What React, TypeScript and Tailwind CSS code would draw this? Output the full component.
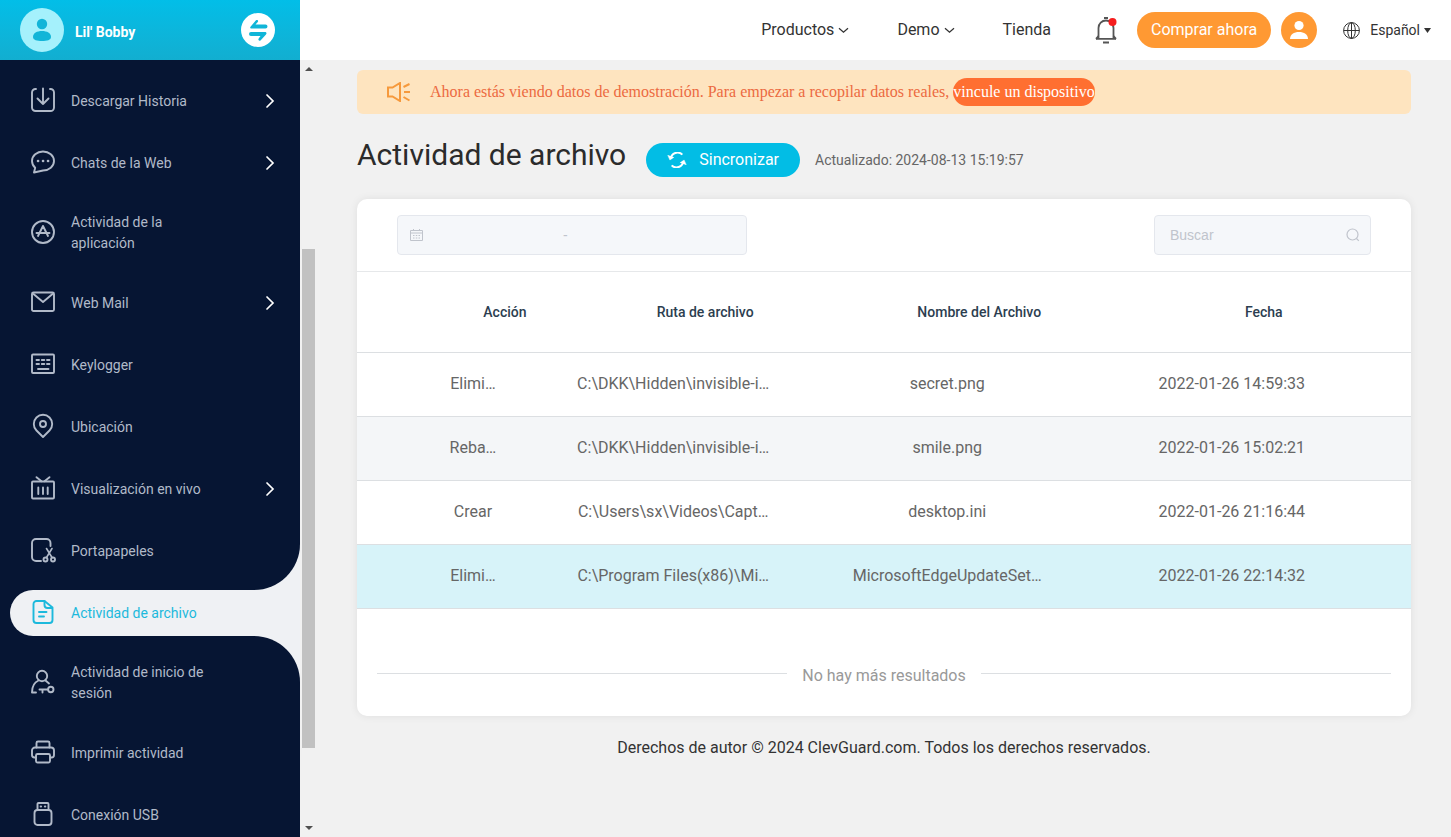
import type { ReactNode } from 'react'
import clsx from 'clsx'

type MenuItem = {
  label: string
  icon: ReactNode
  expandable?: boolean
  active?: boolean
}

const menu: MenuItem[] = [
  {
    label: 'Descargar Historia',
    expandable: true,
    icon: (
      <>
        <path d="M5 1h-.5A3.5 3.5 0 0 0 1 4.5v15A3.5 3.5 0 0 0 4.5 23h15a3.5 3.5 0 0 0 3.5-3.5v-15A3.5 3.5 0 0 0 19.5 1H19" />
        <path d="M12 .5V16M6.500 10.500l5.500 5.500 5.500-5.500" />
      </>
    ),
  },
  {
    label: 'Chats de la Web',
    expandable: true,
    icon: (
      <>
        <path d="M3 22.500l1.200-4.700A9.200 9.200 0 0 1 1 11C1 5.700 5.900 1.500 12 1.500S23 5.700 23 11s-4.900 9.500-11 9.500z" />
        <path d="M7 11h.1M12 11h.1M17 11h.1" strokeWidth="2.600" />
      </>
    ),
  },
  {
    label: 'Actividad de la aplicación',
    icon: (
      <>
        <circle cx="12" cy="12" r="11" />
        <path d="M12 6l-5 10M12 6l5 10M5.500 13h13" />
      </>
    ),
  },
  {
    label: 'Web Mail',
    expandable: true,
    icon: (
      <>
        <rect x="1" y="2.500" width="22" height="18.500" rx="1.500" />
        <path d="M2.500 4l9.500 8 9.500-8" />
      </>
    ),
  },
  {
    label: 'Keylogger',
    icon: (
      <>
        <rect x="1" y="2.500" width="22" height="18.500" rx="1" />
        <path d="M5.500 8h2.500M10.800 8h2.500M16 8h2.500M5.500 12h2.500M10.800 12h2.500M16 12h2.500M7 17h10.500" />
      </>
    ),
  },
  {
    label: 'Ubicación',
    icon: (
      <>
        <path d="M12 23l-6.500-6.500A9 9 0 0 1 2.800 10a9.200 9.200 0 0 1 18.400 0 9 9 0 0 1-2.700 6.500z" />
        <circle cx="12" cy="10" r="3" />
      </>
    ),
  },
  {
    label: 'Visualización en vivo',
    expandable: true,
    icon: (
      <>
        <rect x="1" y="5.500" width="22" height="17" rx="1" />
        <path d="M5.500 1.200l5 4M18.500 1.200l-5 4M7.300 11.500v6.500M12 11.500v6.500M16.700 11.500v6.500" />
      </>
    ),
  },
  {
    label: 'Portapapeles',
    icon: (
      <>
        <path d="M19.500 8V5a4 4 0 0 0-4-4H5a4 4 0 0 0-4 4v14a4 4 0 0 0 4 4h5" />
        <path d="M15.500 10.500l5.500 9M21 10.500l-5.500 9" strokeWidth="1.600" />
        <circle cx="14.500" cy="21.500" r="2" />
        <circle cx="22" cy="21.500" r="2" />
      </>
    ),
  },
  {
    label: 'Actividad de archivo',
    active: true,
    icon: (
      <>
        <path d="M13.500 1h-8a3 3 0 0 0-3 3v16a3 3 0 0 0 3 3h13a3 3 0 0 0 3-3V7.500z" />
        <path d="M13.500 1v4a3 3 0 0 0 3 3h4.500M8 12h7.500M8 16.500h5" />
      </>
    ),
  },
  {
    label: 'Actividad de inicio de sesión',
    icon: (
      <>
        <circle cx="11" cy="6" r="5.200" />
        <path d="M7.500 10.500C4 12 1 16 1 22.500h4M14.500 10.500l3.500 3" />
        <circle cx="19.800" cy="19.500" r="2.700" />
        <path d="M17 19.500H8.500M11.500 19.500v3" />
      </>
    ),
  },
  {
    label: 'Imprimir actividad',
    icon: (
      <>
        <path d="M5.500 7.500V3A1.500 1.500 0 0 1 7 1.500h10A1.500 1.500 0 0 1 18.500 3v4.500" />
        <path d="M5 17.500H3.500A2.500 2.500 0 0 1 1 15v-4.500a3 3 0 0 1 3-3h16a3 3 0 0 1 3 3V15a2.500 2.500 0 0 1-2.500 2.500H19" />
        <rect x="5" y="14" width="14" height="8.500" rx="1.500" />
      </>
    ),
  },
  {
    label: 'Conexión USB',
    icon: (
      <>
        <path d="M6.500 8V2a1 1 0 0 1 1-1h9a1 1 0 0 1 1 1v6" />
        <path d="M6.500 8h11a3 3 0 0 1 3 3v9a3 3 0 0 1-3 3h-11a3 3 0 0 1-3-3v-9a3 3 0 0 1 3-3z" />
        <path d="M9.800 4.500h.2M14 4.500h.2" strokeWidth="2.200" />
      </>
    ),
  },
]

const rows = [
  { action: 'Elimi…', path: 'C:\\DKK\\Hidden\\invisible-i…', name: 'secret.png', date: '2022-01-26 14:59:33' },
  { action: 'Reba…', path: 'C:\\DKK\\Hidden\\invisible-i…', name: 'smile.png', date: '2022-01-26 15:02:21' },
  { action: 'Crear', path: 'C:\\Users\\sx\\Videos\\Capt…', name: 'desktop.ini', date: '2022-01-26 21:16:44' },
  { action: 'Elimi…', path: 'C:\\Program Files(x86)\\Mi…', name: 'MicrosoftEdgeUpdateSet…', date: '2022-01-26 22:14:32' },
]

function SidebarItem({ item }: { item: MenuItem }) {
  return (
    <li className="relative">
      <a
        href="#"
        aria-current={item.active ? 'page' : undefined}
        className={clsx(
          'ml-[10px] flex min-h-[46px] items-center gap-4 py-[10px] pr-6 pl-[21px] text-sm leading-[21px]',
          item.active ? 'rounded-l-full bg-[#eff1f4] text-[#1cb9dc]' : 'text-[#b1bac9]'
        )}
      >
        <svg
          className="mb-[2px] h-6 w-6 shrink-0 overflow-visible"
          viewBox="0 0 24 24"
          fill="none"
          stroke="currentColor"
          strokeWidth="1.900"
          strokeLinecap="round"
          strokeLinejoin="round"
        >
          {item.icon}
        </svg>
        <span className="max-w-[150px]">{item.label}</span>
        {item.expandable && (
          <svg className="ml-auto h-4 w-3 text-white" viewBox="0 0 12 16" fill="none" stroke="currentColor" strokeWidth="1.700" strokeLinecap="round">
            <path d="M3 2l6 6-6 6" />
          </svg>
        )}
      </a>
      {/* curved shoulders joining the active tab to the page */}
      {item.active && (
        <>
          <span className="pointer-events-none absolute right-0 bottom-full h-[46px] w-[46px] bg-[#eff1f4]">
            <span className="block h-full w-full rounded-br-full bg-[#061533]" />
          </span>
          <span className="pointer-events-none absolute top-full right-0 h-[46px] w-[46px] bg-[#eff1f4]">
            <span className="block h-full w-full rounded-tr-full bg-[#061533]" />
          </span>
        </>
      )}
    </li>
  )
}

function Sidebar() {
  return (
    <aside className="flex h-full w-[300px] shrink-0 flex-col overflow-hidden bg-[#061533]">
      <div className="flex h-[60px] shrink-0 items-center bg-linear-to-b from-[#02bee8] to-[#12aed0] pr-[25px] pl-5">
        <svg className="h-11 w-11" viewBox="0 0 44 44">
          <circle cx="22" cy="22" r="22" fill="#a5f1fc" />
          <circle cx="22" cy="16" r="5.200" fill="#12b5d8" />
          <path d="M13 29c0-4 4-6 9-6s9 2 9 6c0 3-4 4-9 4s-9-1-9-4z" fill="#12b5d8" />
        </svg>
        <span className="ml-[11px] pt-1 text-sm font-bold text-white">Lil' Bobby</span>
        <button type="button" aria-label="Cambiar dispositivo" className="ml-auto">
          <svg className="h-[34px] w-[34px]" viewBox="0 0 34 34">
            <circle cx="17" cy="17" r="17" fill="#fff" />
            <path
              d="M9.500 13.700L15 7.200c1.500-.8 2.700.4 1.800 1.900L14.500 11.500H24.500a2 2 0 0 1 0 4H10.500c-1.200 0-1.700-1-1-1.800zM25 21.500L19.500 27.500c-1.500.8-2.700-.4-1.800-1.900l1.800-2.600H10a2 2 0 0 1 0-4h14c1.500 0 2 1.500 1 2.500z"
              fill="#10b5d8"
            />
          </svg>
        </button>
      </div>
      <nav>
        <ul className="flex flex-col gap-4 pt-[18px]">
          {menu.map((item) => (
            <SidebarItem key={item.label} item={item} />
          ))}
        </ul>
      </nav>
    </aside>
  )
}

// Sidebar scroll track with its thumb
function ScrollTrack() {
  return (
    <div className="flex w-[17px] shrink-0 flex-col items-center bg-[#f1f1f1] py-[7px]" aria-hidden="true">
      <svg className="h-1 w-2" viewBox="0 0 8 4" fill="#505050">
        <path d="M4 0l4 4H0z" />
      </svg>
      <div className="grow-[178]" />
      <div className="w-[13px] grow-[499] bg-[#c1c1c1]" />
      <div className="grow-[78]" />
      <svg className="h-1 w-2" viewBox="0 0 8 4" fill="#505050">
        <path d="M4 4L0 0h8z" />
      </svg>
    </div>
  )
}

function ChevronDown() {
  return (
    <svg className="h-[7px] w-[11px]" viewBox="0 0 11 7" fill="none" stroke="currentColor" strokeWidth="1.300">
      <path d="M1 1.200l4.500 4 4.500-4" />
    </svg>
  )
}

function Header() {
  return (
    <header className="flex h-[60px] shrink-0 items-center justify-end bg-white pr-5 text-[#333]">
      <nav className="flex items-center gap-12 text-base">
        <a href="#" className="flex items-center gap-1">Productos <ChevronDown /></a>
        <a href="#" className="flex items-center gap-1">Demo <ChevronDown /></a>
        <a href="#">Tienda</a>
      </nav>
      <button type="button" aria-label="Notificaciones" className="ml-11">
        <svg className="h-7 w-[22px]" viewBox="0 0 22 28" fill="none" stroke="#555" strokeWidth="1.800">
          <path d="M9 2h4M8 26.500h6M1 22.800h20M3.500 22.500V12a7.500 7.500 0 0 1 15 0v10.500" />
          <path d="M3.500 20l-2.500 2.800M18.500 20l2.500 2.800" />
          <circle cx="17.500" cy="6" r="4" fill="#f51d1d" stroke="none" />
        </svg>
      </button>
      <button type="button" className="ml-5 h-9 rounded-full bg-[#ff9933] px-[14px] text-base text-white">
        Comprar ahora
      </button>
      <button type="button" aria-label="Cuenta" className="ml-[10px]">
        <svg className="h-9 w-9" viewBox="0 0 36 36">
          <circle cx="18" cy="18" r="18" fill="#ff9933" />
          <circle cx="18" cy="13.500" r="4.600" fill="#fff" />
          <path d="M9 27c0-4.500 4-7 9-7s9 2.500 9 7z" fill="#fff" />
        </svg>
      </button>
      <button type="button" className="ml-[26px] flex items-center text-sm">
        <svg className="h-[17px] w-[17px]" viewBox="0 0 17 17" fill="none" stroke="#333">
          <circle cx="8.500" cy="8.500" r="7.900" />
          <ellipse cx="8.500" cy="8.500" rx="3.800" ry="7.900" />
          <path d="M.6 8.500h15.800M8.500 .6v15.800" />
        </svg>
        <span className="ml-[10px]">Español</span>
        <svg className="ml-1 h-[5px] w-[7px]" viewBox="0 0 7 5" fill="#333">
          <path d="M0 0h7L3.500 5z" />
        </svg>
      </button>
    </header>
  )
}

function DemoNotice() {
  return (
    <div className="flex h-11 items-center rounded-md bg-[#fee4bf] pl-[30px] font-['Liberation_Serif',serif] text-base text-[#ec6a41]">
      <svg className="h-5 w-6 shrink-0" viewBox="0 0 24 20" fill="none" stroke="#f6993c" strokeWidth="2">
        <path d="M1 5.500h4.500L13 1v18l-7.500-4.500H1zM16.500 5l6-3M17 10h6M16.500 15l6 3.500" />
      </svg>
      <p className="ml-[19px]">
        Ahora estás viendo datos de demostración. Para empezar a recopilar datos reales,{' '}
        <a href="#" className="inline-block rounded-full bg-[#ff6f31] leading-7 text-white">
          vincule un dispositivo
        </a>
      </p>
    </div>
  )
}

function Toolbar() {
  return (
    <div className="flex h-[73px] items-center justify-between border-b border-[#e6e8ea] px-10 font-['Liberation_Sans',sans-serif] text-sm">
      <div className="flex h-10 w-[350px] items-center rounded border border-[#e4e7ed] bg-[#f5f7fa] px-3 text-[#c0c4cc]">
        <svg className="h-3 w-[13px] shrink-0" viewBox="0 0 13 12" fill="none" stroke="currentColor">
          <path d="M.5 1.500h12v10H.5zM.5 4h12M3.500 0v2M9.500 0v2M3 6.500h1.500M5.800 6.500h1.500M8.500 6.500H10M3 9h1.500M5.800 9h1.500M8.500 9H10" />
        </svg>
        <input type="text" disabled aria-label="Fecha de inicio" className="w-[140px]" />
        <span>-</span>
        <input type="text" disabled aria-label="Fecha final" className="w-[140px]" />
      </div>
      <div className="flex h-10 w-[217px] items-center rounded border border-[#e4e7ed] bg-[#f5f7fa] pr-[10px] pl-[15px]">
        <input
          type="text"
          aria-label="Buscar"
          placeholder="Buscar"
          className="min-w-0 flex-1 outline-none placeholder:text-[#c0c4cc]"
        />
        <svg className="h-[14px] w-[14px]" viewBox="0 0 14 14" fill="none" stroke="#c0c4cc" strokeWidth="1.200">
          <circle cx="6.500" cy="6.500" r="5.500" />
          <path d="M10.500 10.500l2.300 2.300" />
        </svg>
      </div>
    </div>
  )
}

function FileTable() {
  return (
    <table className="w-full table-fixed text-center">
      <colgroup>
        <col className="w-[5%]" />
        <col className="w-[12%]" />
        <col className="w-[26%]" />
        <col className="w-[26%]" />
        <col className="w-[28%]" />
        <col className="w-[3%]" />
      </colgroup>
      <thead>
        <tr className="h-20 border-b border-[#dcdfe2] text-sm text-[#2c3e50] [&>th]:font-medium">
          <td />
          <th className="pl-16">Acción</th>
          <th className="pl-16">Ruta de archivo</th>
          <th className="pl-16">Nombre del Archivo</th>
          <th className="pl-16">Fecha</th>
          <td />
        </tr>
      </thead>
      <tbody className="text-base text-[#666]">
        {rows.map((row, i) => (
          <tr
            key={row.date}
            className={clsx('h-16 border-b border-[#dcdfe2]', i === 1 && 'bg-[#f4f6f8]', i === 3 && 'bg-[#d7f3f9]')}
          >
            <td />
            <td>{row.action}</td>
            <td>{row.path}</td>
            <td>{row.name}</td>
            <td>{row.date}</td>
            <td />
          </tr>
        ))}
      </tbody>
    </table>
  )
}

export default function App() {
  return (
    <div className="flex h-screen overflow-hidden bg-[#f1f1f1] font-[Roboto,sans-serif]">
      <Sidebar />
      <div className="flex min-w-0 flex-1 flex-col">
        <Header />
        <div className="flex min-h-0 flex-1">
          <ScrollTrack />
          <main className="min-w-0 flex-1 overflow-hidden px-10 pt-[10px]">
            <DemoNotice />

            <div className="mt-5 flex h-[65px] items-start">
              <h1 className="text-[30px] leading-[42px] text-[#2b2b2b]">Actividad de archivo</h1>
              <button
                type="button"
                className="mt-[9px] ml-5 flex h-[34px] items-center gap-3 rounded-full bg-[#02bde5] px-[21px] text-base text-white"
              >
                <svg className="h-4 w-5" viewBox="0 0 22 18" fill="none" stroke="currentColor" strokeWidth="2.200">
                  <path d="M4 7.500a7.600 7.600 0 0 1 13-4.500M18 10.500a7.600 7.600 0 0 1-13 4.500" />
                  <path d="M.5 3.500l2.500 5.500 4.700-3.200M21.500 14.500l-2.500-5.500-4.700 3.200" fill="currentColor" strokeWidth="0.500" />
                </svg>
                Sincronizar
              </button>
              <span className="mt-[9px] ml-[15px] text-sm leading-[34px] text-[#666]">
                Actualizado: 2024-08-13 15:19:57
              </span>
            </div>

            <section className="overflow-hidden rounded-[10px] bg-white shadow-[0_0_8px_rgba(0,0,0,0.08)]">
              <Toolbar />
              <FileTable />
              <div className="flex h-[107px] items-center gap-[15px] px-5 pt-7 text-base text-[#999]">
                <div className="mb-[6px] h-px flex-1 bg-[#dcdfe2]" />
                <span>No hay más resultados</span>
                <div className="mb-[6px] h-px flex-1 bg-[#dcdfe2]" />
              </div>
            </section>

            <footer className="mt-5 text-center text-base text-[#333]">
              Derechos de autor © 2024 ClevGuard.com. Todos los derechos reservados.
            </footer>
          </main>
        </div>
      </div>
    </div>
  )
}
